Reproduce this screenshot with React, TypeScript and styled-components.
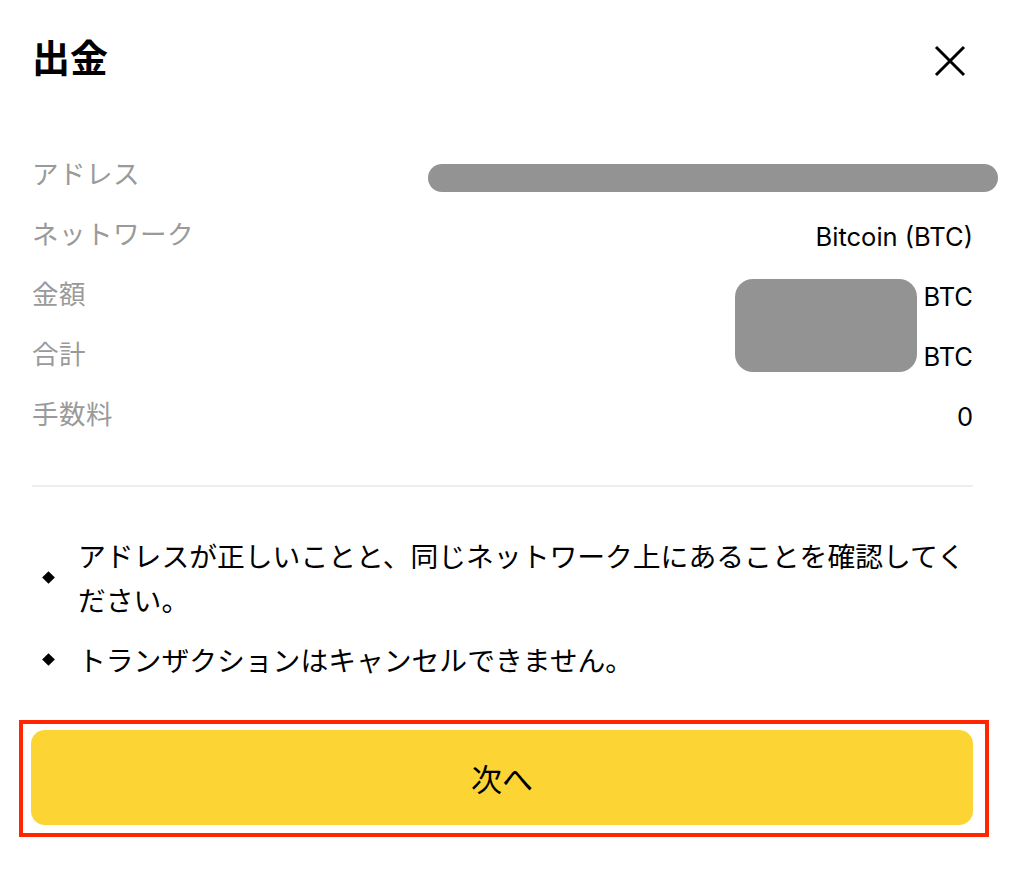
import React from 'react';
import styled, { createGlobalStyle } from 'styled-components';

const GlobalStyle = createGlobalStyle`
  html, body {
    margin: 0;
    padding: 0;
    background: #ffffff;
  }
  body {
    font-family: "Inter", "Noto Sans CJK JP", sans-serif;
    color: #1e2026;
  }
`;

const Page = styled.div`
  width: 1010px;
  box-sizing: border-box;
  padding: 0 37px 0 32px;
`;

const Header = styled.div`
  height: 120px;
  display: flex;
  align-items: center;
  justify-content: space-between;
`;

const Title = styled.h1`
  margin: -10px 0 0;
  font-size: 38px;
  font-weight: 700;
  color: #000;
  font-family: "Noto Sans CJK JP", sans-serif;
`;

const CloseButton = styled.button`
  border: none;
  background: none;
  padding: 0;
  width: 32px;
  height: 32px;
  margin-right: 7px;
  margin-top: 2px;
  cursor: pointer;
  display: flex;
  align-items: center;
  justify-content: center;
`;

const Rows = styled.div`
  position: relative;
  margin-top: 24px;
`;

const Row = styled.div`
  height: 60px;
  display: flex;
  align-items: center;
  justify-content: space-between;
`;

const Label = styled.span`
  font-family: "Noto Sans CJK JP", sans-serif;
  font-size: 26.5px;
  letter-spacing: 0.5px;
  color: #9a9a9a;
  margin-top: -3px;
`;

const Value = styled.span`
  font-size: 25.5px;
  color: #000;
  margin-top: 4px;
`;

const AddressMask = styled.div`
  width: 570px;
  height: 28px;
  border-radius: 14px;
  background: #939393;
  margin-right: -25px;
  margin-top: 8px;
`;

const AmountMask = styled.div`
  position: absolute;
  top: 135px;
  right: 56px;
  width: 182px;
  height: 93px;
  border-radius: 18px;
  background: #939393;
`;

const Divider = styled.hr`
  border: none;
  height: 2px;
  background: #eeeeee;
  margin: 41px 0 0;
`;

const Notes = styled.ul`
  list-style: none;
  margin: 46px 0 0;
  padding: 0;
  display: flex;
  flex-direction: column;
  gap: 16px;
`;

const Note = styled.li`
  display: flex;
  align-items: center;
  font-family: "Noto Sans CJK JP", sans-serif;
  font-size: 27.8px;
  line-height: 44px;
  color: #000;
`;

const Bullet = styled.span`
  flex: none;
  width: 9px;
  height: 9px;
  background: #000;
  transform: rotate(45deg);
  margin: 0 25px 0 12px;
`;

const Highlight = styled.div`
  margin: 39px -16px 0 -13px;
  border: 4px solid #ff2600;
  padding: 6px 12px 8px 8px;
`;

const NextButton = styled.button`
  width: 100%;
  height: 95px;
  border: none;
  border-radius: 14px;
  background: #fcd535;
  font-family: "Noto Sans CJK JP", sans-serif;
  font-size: 31px;
  color: #000;
  cursor: pointer;
`;

const rows = [
  { label: 'ネットワーク', value: 'Bitcoin (BTC)' },
  { label: '金額', value: 'BTC' },
  { label: '合計', value: 'BTC' },
  { label: '手数料', value: '0' },
];

const notes = [
  'アドレスが正しいことと、同じネットワーク上にあることを確認してください。',
  'トランザクションはキャンセルできません。',
];

const App = () => (
  <>
    <GlobalStyle />
    <Page>
      <Header>
        <Title>出金</Title>
        <CloseButton aria-label="close">
          <svg width="32" height="32" viewBox="0 0 32 32">
            <path d="M2 2 L30 30 M30 2 L2 30" stroke="#000" strokeWidth="3" />
          </svg>
        </CloseButton>
      </Header>
      <Rows>
        <Row>
          <Label>アドレス</Label>
          <AddressMask />
        </Row>
        {rows.map((r) => (
          <Row key={r.label}>
            <Label>{r.label}</Label>
            <Value>{r.value}</Value>
          </Row>
        ))}
        <AmountMask />
      </Rows>
      <Divider />
      <Notes>
        {notes.map((n) => (
          <Note key={n}>
            <Bullet />
            <span>{n}</span>
          </Note>
        ))}
      </Notes>
      <Highlight>
        <NextButton>次へ</NextButton>
      </Highlight>
    </Page>
  </>
);

export default App;
